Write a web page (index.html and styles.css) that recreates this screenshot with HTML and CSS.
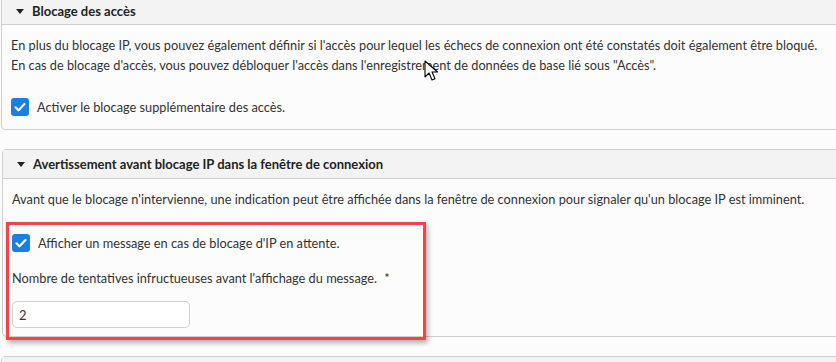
FILE: index.html
```html
<!DOCTYPE html>
<html lang="fr">
<head>
<meta charset="utf-8">
<link rel="stylesheet" href="styles.css">
</head>
<body>
<div class="page">
  <section class="panel first">
    <div class="panel-head"><span class="caret"></span>Blocage des accès</div>
    <div class="panel-body">
      <p class="desc">En plus du blocage IP, vous pouvez également définir si l'accès pour lequel les échecs de connexion ont été constatés doit également être bloqué.<br>En cas de blocage d'accès, vous pouvez débloquer l'accès dans l'enregistrement de données de base lié sous "Accès".</p>
      <label class="check"><span class="box"><svg viewBox="0 0 18 18" width="18" height="18"><path d="M4.5 9.3l3 3 6-6.3" fill="none" stroke="#fff" stroke-width="2.2" stroke-linecap="round" stroke-linejoin="round"/></svg></span>Activer le blocage supplémentaire des accès.</label>
    </div>
  </section>
  <section class="panel second">
    <div class="panel-head"><span class="caret"></span>Avertissement avant blocage IP dans la fenêtre de connexion</div>
    <div class="panel-body">
      <p class="desc">Avant que le blocage n'intervienne, une indication peut être affichée dans la fenêtre de connexion pour signaler qu'un blocage IP est imminent.</p>
      <label class="check"><span class="box"><svg viewBox="0 0 18 18" width="18" height="18"><path d="M4.5 9.3l3 3 6-6.3" fill="none" stroke="#fff" stroke-width="2.2" stroke-linecap="round" stroke-linejoin="round"/></svg></span>Afficher un message en cas de blocage d'IP en attente.</label>
      <div class="field-label">Nombre de tentatives infructueuses avant l'affichage du message. <span class="req">*</span></div>
      <div class="input">2</div>
      <div class="highlight"></div>
    </div>
  </section>
  <section class="panel third">
    <div class="panel-head"></div>
  </section>
  <svg class="cursor" width="14" height="22" viewBox="0 0 14 22"><path d="M1 1v16l4-4 3 7 3-1.3-3-6.7h5.5z" fill="#fff" stroke="#000" stroke-width="1.1" stroke-linejoin="round"/></svg>
</div>
</body>
</html>
```
FILE: styles.css
```css
html, body { margin: 0; padding: 0; }
body {
  background: #fcfcfc;
  font-family: Lato, "Noto Sans", sans-serif;
  font-size: 12.75px;
  color: #333;
  overflow: hidden;
  width: 836px;
  height: 362px;
}
.page { position: relative; padding-left: 1px; }
.panel {
  border: 1px solid #cfcfcf;
  border-radius: 4px;
  margin-right: -20px;
  background: #fcfcfc;
  position: relative;
}
.panel.first { margin-top: -6px; }
.panel + .panel { margin-top: 19px; }
.panel.second { margin-left: 1px; }
.panel-head {
  height: 29px;
  background: #f3f3f3;
  border-bottom: 1px solid #cfcfcf;
  display: flex;
  align-items: center;
  font-weight: 700;
  font-size: 13px;
  color: #222;
  padding-left: 14px;
  box-sizing: border-box;
}
.panel.first .panel-head { height: 30px; padding-top: 3px; }
.caret {
  width: 0; height: 0;
  border-left: 4.5px solid transparent;
  border-right: 4.5px solid transparent;
  border-top: 5px solid #222;
  margin-right: 8px;
}
.panel-body { padding: 10px 9px 8px; position: relative; }
.panel.first .panel-body { padding-bottom: 13px; }
.desc { margin: 0; line-height: 20px; }
.check {
  display: flex; align-items: center;
  margin-top: 25px; line-height: 18px;
}
.panel.first .check { margin-top: 23px; }
.box {
  width: 18px; height: 18px;
  background: #1a7ee6;
  border-radius: 3px;
  margin-right: 8px;
  display: flex;
}
.field-label { margin-top: 16px; line-height: 20px; }
.req { margin-left: 4px; }
.input {
  margin-top: 13px;
  width: 178px; height: 27px;
  box-sizing: border-box;
  background: #fff;
  border: 1px solid #cfcfcf;
  border-radius: 5px;
  padding-left: 6px;
  display: flex; align-items: center;
  font-size: 13px;
}
.highlight {
  position: absolute;
  left: 3px; top: 43px;
  width: 414px; height: 112px;
  border: 3.5px solid #f2454a;
  box-shadow: 2px 3px 5px rgba(0,0,0,0.3);
  pointer-events: none;
}
.cursor { position: absolute; left: 424px; top: 66px; }
```
